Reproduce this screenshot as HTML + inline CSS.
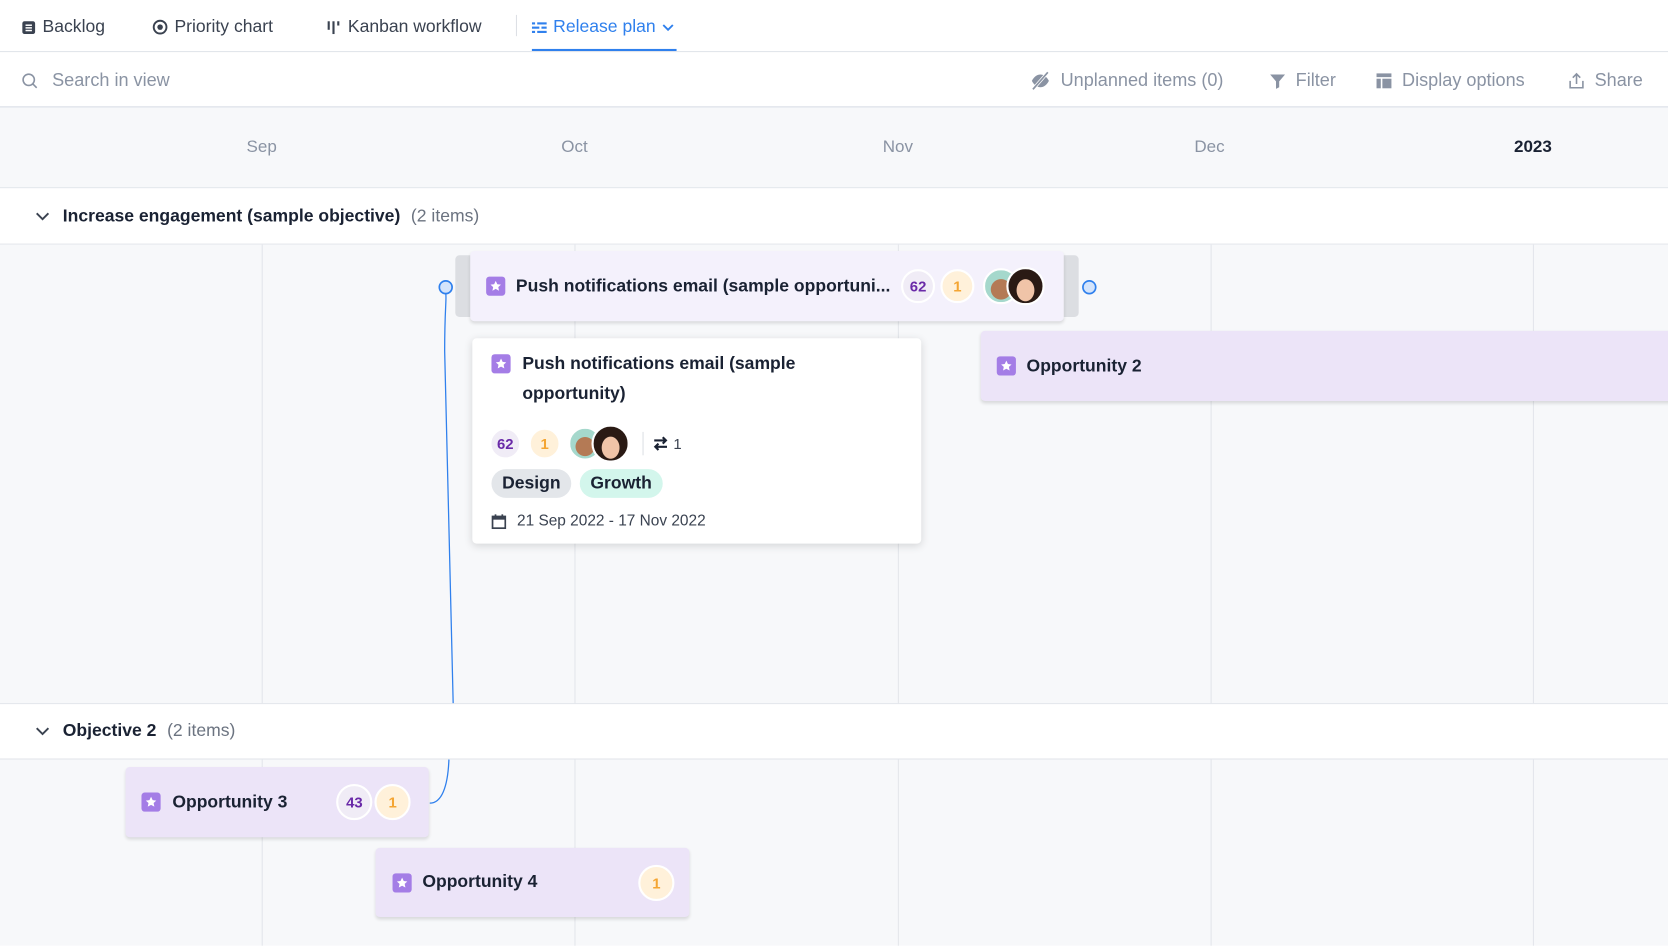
<!DOCTYPE html>
<html><head><meta charset="utf-8"><style>
*{box-sizing:border-box;margin:0;padding:0}
html,body{width:1668px;height:946px;overflow:hidden;background:#fff}
#w{position:absolute;left:0;top:0;width:1568px;height:889px;transform:scale(1.06378);transform-origin:0 0;font-family:"Liberation Sans",sans-serif;color:#1a2233}
.a{position:absolute}
.tab{position:absolute;top:16px;font-size:16.5px;color:#3a4250;display:flex;align-items:center;gap:6px;white-space:nowrap}
.tb{position:absolute;top:66px;font-size:17px;color:#8a93a3;display:flex;align-items:center;gap:9px;white-space:nowrap}
.mon{position:absolute;top:130px;font-size:16px;color:#8a93a3;transform:translateX(-50%)}
.vl{position:absolute;width:1px;background:#e3e6eb}
.hl{position:absolute;left:0;width:1568px;height:1px;background:#e1e4ea}
.gh{position:absolute;left:0;width:1568px;background:#fff;font-size:16.5px;display:flex;align-items:center}
.card{position:absolute;border-radius:4px;display:flex;align-items:center;box-shadow:0 2px 3px rgba(0,0,0,.12)}
.star{width:18px;height:18px;border-radius:3px;background:#a47de6;display:inline-flex;align-items:center;justify-content:center;flex:none}
.t{font-size:16.5px;font-weight:bold;color:#1a2233;white-space:nowrap}
.bd{width:30px;height:30px;border-radius:50%;border:2px solid #fff;display:flex;align-items:center;justify-content:center;font-size:14px;font-weight:bold;flex:none}
.p{background:#f0ecf6;color:#6a2aa8}.o{background:#fff1da;color:#f4a533}
.av{width:30px;height:30px;border-radius:50%;border:2px solid #fff;flex:none;overflow:hidden}
</style></head><body><div id="w">
<div class="tab" style="left:20px"><svg width="14" height="14" viewBox="0 0 14 14"><rect x="1" y="1" width="12" height="12" rx="2" fill="#3a4250"/><rect x="4" y="4" width="6" height="1.4" fill="#fff"/><rect x="4" y="6.5" width="6" height="1.4" fill="#fff"/><rect x="4" y="9" width="6" height="1.4" fill="#fff"/></svg>Backlog</div>
<div class="tab" style="left:143px"><svg width="15" height="15" viewBox="0 0 15 15"><circle cx="7.5" cy="7.5" r="6" fill="none" stroke="#3a4250" stroke-width="1.8"/><circle cx="7.5" cy="7.5" r="2.6" fill="#3a4250"/></svg>Priority chart</div>
<div class="tab" style="left:307px"><svg width="14" height="15" viewBox="0 0 14 15"><rect x="1" y="2" width="2" height="8" fill="#3a4250"/><rect x="5.5" y="2" width="2" height="12" fill="#3a4250"/><rect x="10" y="2" width="2" height="4" fill="#3a4250"/></svg>Kanban workflow</div>
<div class="a" style="left:485px;top:14px;width:1px;height:20px;background:#dde0e5"></div>
<div class="tab" style="left:500px;color:#2f80ed"><svg width="14" height="12" viewBox="0 0 14 12"><g fill="#2f80ed"><rect x="0" y="1" width="3" height="2"/><rect x="5" y="1" width="9" height="2"/><rect x="0" y="5" width="7" height="2"/><rect x="9" y="5" width="5" height="2"/><rect x="0" y="9" width="3" height="2"/><rect x="5" y="9" width="9" height="2"/></g></svg>Release plan<svg width="12" height="8" viewBox="0 0 12 8"><path d="M1.5 1.5L6 6l4.5-4.5" fill="none" stroke="#2f80ed" stroke-width="1.8"/></svg></div>
<div class="a" style="left:500px;top:46px;width:136px;height:2px;background:#2f80ed"></div>
<div class="hl" style="top:48px"></div>
<div class="tb" style="left:20px"><svg width="16" height="16" viewBox="0 0 16 16"><circle cx="7" cy="7" r="5.3" fill="none" stroke="#8a93a3" stroke-width="1.5"/><path d="M11 11l3.5 3.5" stroke="#8a93a3" stroke-width="1.5"/></svg><span style="margin-left:4px">Search in view</span></div>
<div class="tb" style="left:968px"><svg width="20" height="18" viewBox="0 0 20 18"><path d="M2 9c2-4 5-6 8-6s6 2 8 6c-2 4-5 6-8 6S4 13 2 9z" fill="#8a93a3"/><path d="M3 17L17 1" stroke="#fff" stroke-width="3"/><path d="M3 17L17 1" stroke="#8a93a3" stroke-width="1.6"/></svg>Unplanned items (0)</div>
<div class="tb" style="left:1193px"><svg width="16" height="16" viewBox="0 0 16 16"><path d="M1 2h14l-5.5 6.5V14l-3 1.5V8.5z" fill="#8a93a3"/></svg>Filter</div>
<div class="tb" style="left:1293px"><svg width="16" height="16" viewBox="0 0 16 16"><rect x="1" y="1" width="14" height="3.5" fill="#8a93a3"/><rect x="1" y="6" width="4" height="9" fill="#8a93a3"/><rect x="6.5" y="6" width="8.5" height="9" fill="#8a93a3"/></svg>Display options</div>
<div class="tb" style="left:1474px"><svg width="16" height="16" viewBox="0 0 16 16"><path d="M8 11V2M4.5 5L8 1.5 11.5 5M2 8v6.5h12V8" fill="none" stroke="#8a93a3" stroke-width="1.5"/></svg>Share</div>
<div class="a" style="left:0;top:100px;width:1568px;height:1px;background:#d5dae3"></div>
<div class="a" style="left:0;top:101px;width:1568px;height:75px;background:#f7f8fa"></div>
<div class="mon" style="left:246px">Sep</div><div class="mon" style="left:540px">Oct</div><div class="mon" style="left:844px">Nov</div><div class="mon" style="left:1137px">Dec</div><div class="mon" style="left:1441px;color:#1a2233;font-weight:bold">2023</div>
<div class="hl" style="top:176px"></div>
<div class="gh" style="top:177px;height:52px"><svg style="margin-left:33px" width="14" height="9" viewBox="0 0 14 9"><path d="M1.5 1.5L7 7l5.5-5.5" fill="none" stroke="#3a4250" stroke-width="1.8"/></svg><b style="margin-left:12px">Increase engagement (sample objective)</b><span style="margin-left:10px;color:#6b7380">(2 items)</span></div>
<div class="hl" style="top:229px"></div>
<div class="a" style="left:0;top:230px;width:1568px;height:431px;background:#f7f8fa"></div>
<div class="vl" style="left:246px;top:230px;height:431px"></div><div class="vl" style="left:540px;top:230px;height:431px"></div><div class="vl" style="left:844px;top:230px;height:431px"></div><div class="vl" style="left:1138px;top:230px;height:431px"></div><div class="vl" style="left:1441px;top:230px;height:431px"></div>
<div class="hl" style="top:661px"></div>
<div class="gh" style="top:662px;height:51px"><svg style="margin-left:33px" width="14" height="9" viewBox="0 0 14 9"><path d="M1.5 1.5L7 7l5.5-5.5" fill="none" stroke="#3a4250" stroke-width="1.8"/></svg><b style="margin-left:12px">Objective 2</b><span style="margin-left:10px;color:#6b7380">(2 items)</span></div>
<div class="hl" style="top:713px"></div>
<div class="a" style="left:0;top:714px;width:1568px;height:175px;background:#f7f8fa"></div>
<div class="vl" style="left:246px;top:714px;height:175px"></div><div class="vl" style="left:540px;top:714px;height:175px"></div><div class="vl" style="left:844px;top:714px;height:175px"></div><div class="vl" style="left:1138px;top:714px;height:175px"></div><div class="vl" style="left:1441px;top:714px;height:175px"></div>
<svg class="a" style="left:0;top:0" width="1568" height="889"><path d="M419 276C420 280 418 290 418 330L426 661" fill="none" stroke="#2f80ed" stroke-width="1.2"/><path d="M422 714C421 740 415 755 404 755" fill="none" stroke="#2f80ed" stroke-width="1.2"/><circle cx="419" cy="270" r="6" fill="#d4e4fb" stroke="#2f80ed" stroke-width="1.6"/><circle cx="1024" cy="270" r="6" fill="#d4e4fb" stroke="#2f80ed" stroke-width="1.6"/></svg>
<div class="a" style="left:428px;top:240px;width:586px;height:58px;background:#dcdee2;border-radius:4px"></div>
<div class="card" style="left:442px;top:236px;width:558px;height:66px;background:#f4f1fc">
<span class="star" style="margin-left:15px"><svg width="12" height="12" viewBox="0 0 12 12"><path d="M6 1l1.5 3.2 3.4.4-2.5 2.3.7 3.4L6 8.6 2.9 10.3l.7-3.4L1.1 4.6l3.4-.4z" fill="#fff"/></svg></span>
<span class="t" style="margin-left:10px">Push notifications email (sample opportuni...</span>
<span class="bd p" style="margin-left:10px;width:32px;height:32px">62</span><span class="bd o" style="margin-left:5px;width:32px;height:32px">1</span>
<span class="av" style="margin-left:8px;width:34px;height:34px;background:radial-gradient(circle at 50% 60%,#b47a55 0 40%,#a5d8cc 42%)"></span><span class="av" style="margin-left:-12px;width:36px;height:36px;background:radial-gradient(ellipse at 50% 62%,#f0c4a8 0 36%,#2a1a14 38%)"></span>
</div>
<div class="a" style="left:444px;top:318px;width:422px;height:193px;background:#fff;border-radius:4px;box-shadow:0 2px 8px rgba(0,0,0,.14)">
<span class="star a" style="left:18px;top:15px"><svg width="12" height="12" viewBox="0 0 12 12"><path d="M6 1l1.5 3.2 3.4.4-2.5 2.3.7 3.4L6 8.6 2.9 10.3l.7-3.4L1.1 4.6l3.4-.4z" fill="#fff"/></svg></span>
<div class="a t" style="left:47px;top:10px;line-height:28px;white-space:normal;width:330px">Push notifications email (sample opportunity)</div>
<div class="a" style="left:16px;top:81px;display:flex;align-items:center">
<span class="bd p" style="width:30px;height:30px">62</span><span class="bd o" style="margin-left:7px">1</span>
<span class="av" style="margin-left:7px;width:32px;height:32px;background:radial-gradient(circle at 50% 60%,#b47a55 0 40%,#a5d8cc 42%)"></span><span class="av" style="margin-left:-10px;width:36px;height:36px;background:radial-gradient(ellipse at 50% 62%,#f0c4a8 0 36%,#2a1a14 38%)"></span>
<span style="width:1px;height:22px;background:#dde0e5;margin-left:12px"></span>
<svg style="margin-left:9px" width="14" height="14" viewBox="0 0 14 14"><path d="M1 4h11M9 1l3 3-3 3M13 10H2M5 7l-3 3 3 3" fill="none" stroke="#1a2233" stroke-width="2"/></svg><span style="margin-left:5px;font-size:14px;color:#3a4250">1</span></div>
<div class="a" style="left:18px;top:123px;height:27px;padding:0 10px;border-radius:14px;background:#e3e6ea;font-size:16.5px;line-height:27px;font-weight:600">Design</div>
<div class="a" style="left:101px;top:123px;height:27px;padding:0 10px;border-radius:14px;background:#d3f6ec;font-size:16.5px;line-height:27px;font-weight:600">Growth</div>
<div class="a" style="left:18px;top:164px;display:flex;align-items:center;gap:10px;font-size:14.5px;color:#3a4250"><svg width="14" height="15" viewBox="0 0 14 15"><rect x="1" y="2.5" width="12" height="11" fill="none" stroke="#3a4250" stroke-width="1.6"/><rect x="1" y="2.5" width="12" height="3" fill="#3a4250"/><rect x="3" y="0.5" width="1.6" height="3" fill="#3a4250"/><rect x="9.4" y="0.5" width="1.6" height="3" fill="#3a4250"/></svg>21 Sep 2022 - 17 Nov 2022</div>
</div>
<div class="card" style="left:922px;top:311px;width:660px;height:66px;background:#ece4f8">
<span class="star" style="margin-left:15px"><svg width="12" height="12" viewBox="0 0 12 12"><path d="M6 1l1.5 3.2 3.4.4-2.5 2.3.7 3.4L6 8.6 2.9 10.3l.7-3.4L1.1 4.6l3.4-.4z" fill="#fff"/></svg></span><span class="t" style="margin-left:10px">Opportunity 2</span></div>
<div class="card" style="left:118px;top:721px;width:285px;height:66px;background:#ece4f8">
<span class="star" style="margin-left:15px"><svg width="12" height="12" viewBox="0 0 12 12"><path d="M6 1l1.5 3.2 3.4.4-2.5 2.3.7 3.4L6 8.6 2.9 10.3l.7-3.4L1.1 4.6l3.4-.4z" fill="#fff"/></svg></span><span class="t" style="margin-left:11px">Opportunity 3</span>
<span class="bd p" style="margin-left:46px;width:34px;height:34px">43</span><span class="bd o" style="margin-left:2px;width:34px;height:34px">1</span></div>
<div class="card" style="left:353px;top:797px;width:295px;height:65px;background:#ece4f8">
<span class="star" style="margin-left:16px"><svg width="12" height="12" viewBox="0 0 12 12"><path d="M6 1l1.5 3.2 3.4.4-2.5 2.3.7 3.4L6 8.6 2.9 10.3l.7-3.4L1.1 4.6l3.4-.4z" fill="#fff"/></svg></span><span class="t" style="margin-left:10px">Opportunity 4</span>
<span class="bd o" style="margin-left:auto;margin-right:14px;width:34px;height:34px">1</span></div>
</div></body></html>
